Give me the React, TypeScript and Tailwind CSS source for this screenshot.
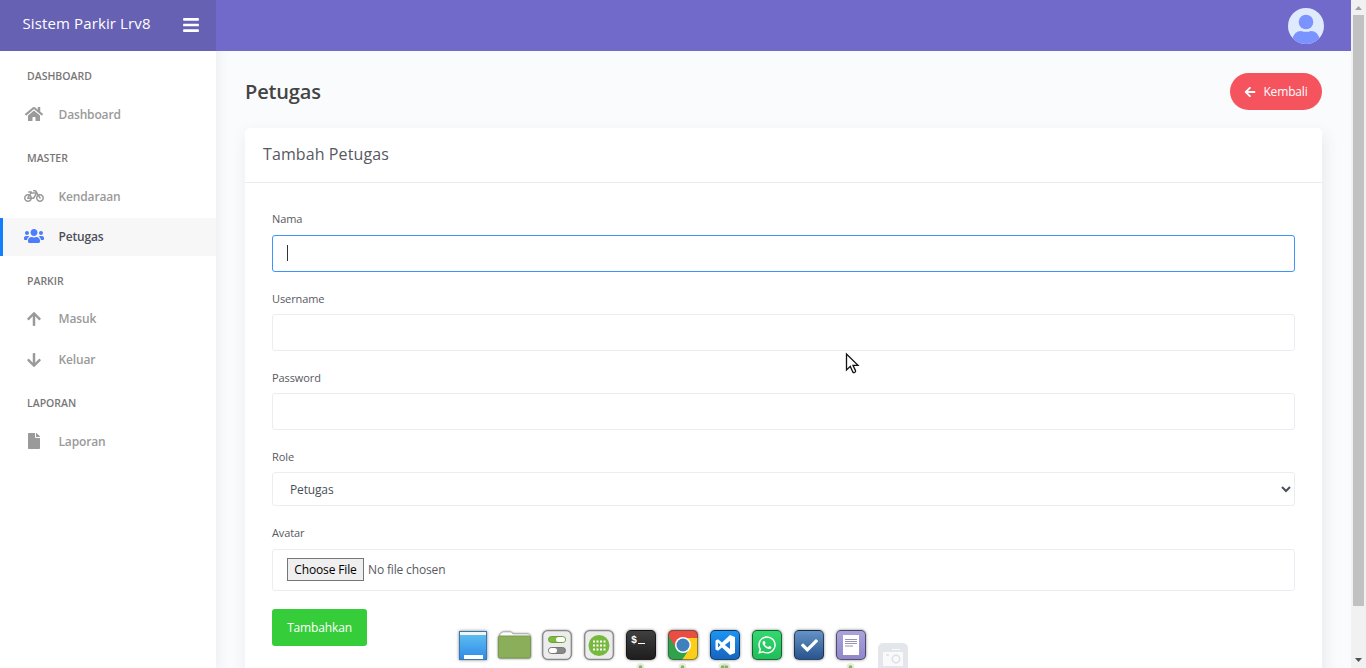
import type { ReactNode } from "react";
import { FaArrowDown, FaArrowLeft, FaArrowUp, FaBars, FaBicycle, FaCheck, FaFile, FaHome, FaUsers, FaWhatsapp } from "react-icons/fa";

function Section({ children, className }: { children: ReactNode; className: string }) {
  return <h4 className={`pl-[27px] text-[10.5px] leading-4 font-semibold text-[#777777] ${className}`}>{children}</h4>;
}

function NavItem({ icon, label, active = false, raised = false }: { icon: ReactNode; label: string; active?: boolean; raised?: boolean }) {
  return (
    <a className={`flex h-[38px] items-center ${active ? "border-l-[3px] border-[#177dff] bg-[#f7f7f7] pl-[19px] text-[#4d4f59]" : "pl-[22px] text-[#9a9a9a]"}`}>
      <span className={`mr-[12.5px] flex w-6 justify-center ${active ? "text-[#4d7cfe]" : ""} ${raised ? "-mt-0.5" : ""}`}>{icon}</span>
      <span className="text-[12px] leading-[18px] font-semibold tracking-[-0.15px]">{label}</span>
    </a>
  );
}

function Label({ children }: { children: ReactNode }) {
  return <label className="block h-[18px] text-[11px] leading-[18px] tracking-[-0.1px] text-[#575962]">{children}</label>;
}

function Dock() {
  const tile = "flex h-[30px] w-[30px] items-center justify-center rounded-[5px] border border-black/50 shadow-[0_0_3px_rgba(0,0,0,0.5)]";
  return (
    <div className="absolute left-[458px] top-[630px] flex h-[38px] gap-3">
      <div className="ml-px mt-px mr-px flex h-[29px] w-[28px] flex-col items-center justify-between border border-[#3978b0] bg-linear-to-b from-[#62c1f0] to-[#318be8] shadow-[0_0_3px_rgba(0,0,0,0.5)]">
        <i className="h-[3px] w-full bg-[#f4f4f4]" />
        <i className="h-1 w-[19px] bg-white" />
      </div>
      <svg className="-ml-[2px] h-[30px] w-[34px] drop-shadow-[0_0_1px_rgba(0,0,0,0.6)]" viewBox="0 0 34 30">
        <path d="M2 9V4l3-2h8l2 2h15q2 0 2 2v3" fill="#fff" stroke="#aaa" strokeWidth=".6" />
        <rect x=".5" y="6" width="32" height="22" rx="1.5" fill="#8bae5b" stroke="#759b4c" />
      </svg>
      <svg className="-ml-[2px] h-[30px] w-[30px] drop-shadow-[0_0_1px_rgba(0,0,0,0.4)]" viewBox="0 0 30 30">
        <rect x=".7" y=".7" width="28.6" height="28.6" rx="5" fill="#ececec" stroke="#888" strokeWidth="1.3" />
        <rect x="6.5" y="6.5" width="17" height="6" rx="3" fill="#7cba41" stroke="#68a333" />
        <rect x="14" y="7" width="9" height="5" rx="2.5" fill="#fff" />
        <rect x="6.5" y="17.5" width="17" height="6" rx="3" fill="#888" stroke="#777" />
        <rect x="7" y="18" width="8" height="5" rx="2.5" fill="#fff" />
      </svg>
      <svg className="h-[30px] w-[30px] drop-shadow-[0_0_1px_rgba(0,0,0,0.4)]" viewBox="0 0 30 30">
        <rect x=".7" y=".7" width="28.6" height="28.6" rx="5" fill="#ececec" stroke="#888" strokeWidth="1.3" />
        <circle cx="15" cy="15.5" r="10.5" fill="#77b93c" />
        {[10.5, 14.5, 18.5].map((y) => [9.5, 13, 16.5, 20].map((x) => <rect key={`${x}-${y}`} x={x - 0.5} y={y} width="2" height="2" fill="#fff" />))}
      </svg>
      <div className={`${tile} items-start! justify-start! bg-linear-to-b from-[#404040] to-[#1e1e1e] pl-1 pt-1 font-['Liberation_Mono'] text-[10px] leading-[12px] font-bold text-white`}>
        <span>$</span><i className="ml-px mt-[8px] h-px w-[7px] bg-white" />
      </div>
      <svg className="h-[30px] w-[30px] rounded-[5px] shadow-[0_0_3px_rgba(0,0,0,0.6)]" viewBox="0 0 30 30">
        <path fill="#2fa24b" d="M0 0h30v30H0z" />
        <path fill="#fbcf19" d="M15 8h15v22H14l8-12z" />
        <path fill="#ea4e42" d="M0 0h30v8H15a7 7 0 0 0-7 10L0 5z" />
        <circle cx="15" cy="15" r="8" fill="#fff" />
        <circle cx="15" cy="15" r="6.5" fill="#3f80bd" />
        <rect x=".5" y=".5" width="29" height="29" rx="5" fill="none" stroke="#444" strokeOpacity=".6" />
      </svg>
      <div className={`${tile} bg-linear-to-b from-[#1b95f2] to-[#1764c0] text-white`}>
        <svg className="h-[22px] w-[22px]" viewBox="0 0 22 22">
          <path fill="currentColor" fillRule="evenodd" d="M16 1l5 2v16l-5 2-8-7.5-4 3.2-2.5-1.2v-9L4 5.300l4 3.200zM16 7l-5.200 4 5.200 4zM4 8.500v5L6.500 11z" />
        </svg>
      </div>
      <div className={`${tile} bg-linear-to-b from-[#32d96e] to-[#20bd59] text-white`}><FaWhatsapp size={20} /></div>
      <div className={`${tile} bg-linear-to-b from-[#6593c5] to-[#29548f] text-white`}><FaCheck size={17} /></div>
      <div className={`${tile} bg-linear-to-b from-[#aaa3db] to-[#8f87ca]`}>
        <svg className="h-5 w-4" viewBox="0 0 16 20">
          <path fill="#fff" d="M0 0h16v20H0z" />
          <path d="M2 4.5h12M2 6.500h12M2 8.500h12M2 11h8" stroke="#8d87ad" strokeWidth=".9" />
        </svg>
      </div>
      <svg className="mt-[13px] h-[30px] w-[30px] -mb-2" viewBox="0 0 30 30">
        <rect width="30" height="30" rx="5" fill="#e3e6eb" />
        <path fill="#fafafa" d="M5 9h20v14H5zM14 6h8v1h-8z" />
        <circle cx="18" cy="16" r="3.7" fill="none" stroke="#dce0e7" strokeWidth="1.5" />
        <path d="M8 12h3" stroke="#dce0e7" strokeWidth="1.5" />
      </svg>
    </div>
  );
}

function DockIndicators() {
  return (
    <svg className="absolute left-[630px] top-[662px] h-1.5 w-[230px]" viewBox="0 0 230 6">
      {[10.5, 52.5, 92.5, 96.5, 220.5].map((x) => (
        <g key={x} fill="#78a854"><circle cx={x} cy="5" r="4" opacity=".2" /><circle cx={x} cy="5" r="1.8" opacity=".85" /></g>
      ))}
    </svg>
  );
}

export default function App() {
  const field = "block w-full rounded-[3px] border border-[#ebedf2] bg-white outline-none";
  return (
    <div className="relative flex h-[668px] w-[1366px] overflow-hidden bg-[#f9fbfd] font-['Open_Sans',sans-serif] text-[#575962]">
      <aside className="z-10 flex w-[216px] shrink-0 flex-col bg-white shadow-[4px_4px_10px_rgba(69,65,78,0.06)]">
        <div className="flex h-[51px] items-center justify-between bg-[#6761b4] pl-[22.5px] pr-4 text-white">
          <span className="-mt-1.5 text-[15px] leading-5 tracking-[0.12px]">Sistem Parkir Lrv8</span>
          <FaBars size={18} className="-mt-0.5" />
        </div>
        <nav className="flex flex-col">
          <Section className="mt-[17px]">DASHBOARD</Section>
          <div className="mt-3"><NavItem raised icon={<FaHome size={18} />} label="Dashboard" /></div>
          <Section className="mt-4">MASTER</Section>
          <div className="mt-3 flex flex-col gap-[2px]">
            <NavItem raised icon={<FaBicycle size={20} />} label="Kendaraan" />
            <NavItem active raised icon={<FaUsers size={20} />} label="Petugas" />
          </div>
          <Section className="mt-[17px]">PARKIR</Section>
          <div className="mt-[11px] flex flex-col gap-[3px]">
            <NavItem icon={<FaArrowUp size={16} />} label="Masuk" />
            <NavItem icon={<FaArrowDown size={16} />} label="Keluar" />
          </div>
          <Section className="mt-4">LAPORAN</Section>
          <div className="mt-3"><NavItem raised icon={<FaFile size={16} />} label="Laporan" /></div>
        </nav>
      </aside>

      <div className="flex w-[1135px] shrink-0 flex-col">
        <header className="z-20 flex h-[51px] shrink-0 items-center justify-end bg-[#716aca] pr-[27px]">
          <svg className="mt-px h-9 w-9 rounded-full" viewBox="0 0 36 36">
            <path fill="#e0eaff" d="M0 0h36v36H0z" />
            <circle cx="18" cy="14" r="7.3" fill="#7b93ff" />
            <path fill="#7b93ff" d="M4 32q2-9 9-9 5 1.7 10 0 7 0 9 9v4H4z" />
          </svg>
        </header>
        <main className="flex grow flex-col pl-[29px] pr-[29px] pt-[22px]">
          <div className="flex h-[37px] shrink-0 items-center justify-between">
            <h1 className="text-[20px] leading-7 font-semibold tracking-[-0.15px] text-[#444444]">Petugas</h1>
            <button className="flex h-[37px] w-[92px] items-center justify-center gap-[7px] rounded-full bg-[#f5545f] text-[12px] tracking-[-0.15px] text-white">
              <FaArrowLeft size={12} /><span>Kembali</span>
            </button>
          </div>
          <section className="mt-[18px] h-[560px] shrink-0 rounded-[5px] bg-white shadow-[2px_6px_15px_0_rgba(69,65,78,0.1)]">
            <h2 className="h-[55px] border-b border-[#ebecec] pl-[18px] pt-[13px] text-[16px] leading-[26px] tracking-[0.1px]">Tambah Petugas</h2>
            <form className="px-[27px] pt-[27px]">
              <Label>Nama</Label>
              <div className="mt-[7px] flex h-[37px] items-center rounded-[3px] border border-[#3e93ff] pl-[14px]"><i className="-mt-0.5 h-4 w-px bg-[#333333]" /></div>
              <div className="mt-[18px]"><Label>Username</Label></div>
              <input className={`${field} mt-[6px] h-[37px]`} />
              <div className="mt-[18px]"><Label>Password</Label></div>
              <input type="password" className={`${field} mt-[6px] h-[37px]`} />
              <div className="mt-[18px]"><Label>Role</Label></div>
              <select className={`${field} mt-[6px] h-[34px] pl-[13px] text-[12px] tracking-[-0.15px] text-[#495057]`}><option>Petugas</option></select>
              <div className="mt-[18px]"><Label>Avatar</Label></div>
              <div className={`${field} mt-[7px] flex! h-[42px] items-center pl-[14px] text-[12px] tracking-[-0.15px]`}>
                <button type="button" className="-mt-0.5 h-[23px] w-[77px] border border-[#767676] bg-[#efefef] pt-0.5 leading-[18px] text-black">Choose File</button>
                <span className="ml-1">No file chosen</span>
              </div>
              <button type="button" className="mt-[18px] h-[37px] w-[95px] rounded-[3px] bg-[#35cd3a] text-[12px] tracking-[-0.15px] text-white">Tambahkan</button>
            </form>
          </section>
        </main>
      </div>

      <div className="z-10 flex w-[15px] shrink-0 flex-col items-center bg-[#f1f1f1]">
        <svg className="h-[15px] w-[15px]" viewBox="0 0 15 15"><path d="M4 10h7L7.5 6z" fill="#a3a3a3" /></svg>
        <div className="h-[591px] w-[11px] bg-[#c1c1c1]" />
        <svg className="mt-auto h-[15px] w-[15px]" viewBox="0 0 15 15"><path d="M4 5h7L7.5 9z" fill="#505050" /></svg>
      </div>
      <Dock />
      <DockIndicators />
      <svg className="absolute left-[844px] top-[352px] h-6 w-4" viewBox="0 0 16 24">
        <path d="M2.5 2v16l3.8-3.6 2.5 5.5q.6 1.2 1.9.6t.8-1.9L9 13.3h5z" fill="#fff" stroke="#111" strokeWidth="1.3" />
      </svg>
    </div>
  );
}
